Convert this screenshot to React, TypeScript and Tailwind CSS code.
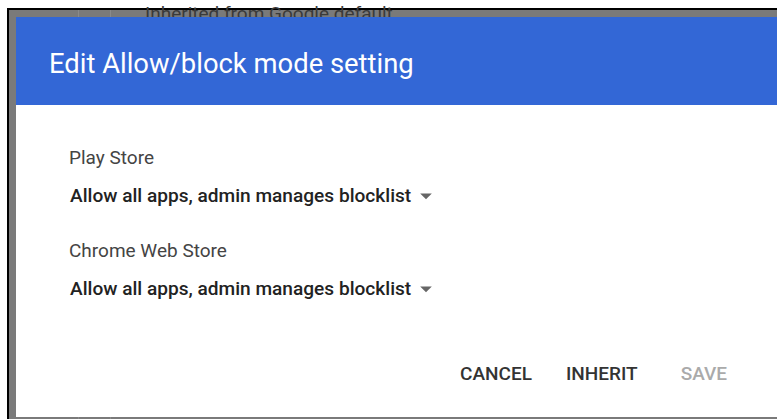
import { useState } from 'react';

type StoreKey = 'play' | 'chrome';

const MODE_LABEL = 'Allow all apps, admin manages blocklist';

const STORES: { key: StoreKey; name: string }[] = [
  { key: 'play', name: 'Play Store' },
  { key: 'chrome', name: 'Chrome Web Store' },
];

function Caret() {
  return (
    <svg width="20" height="20" viewBox="0 0 24 24" className="ml-[5px] shrink-0">
      <path d="M5 9l7 7 7-7z" fill="#666" />
    </svg>
  );
}

export default function App() {
  const [modes] = useState<Record<StoreKey, string>>({
    play: MODE_LABEL,
    chrome: MODE_LABEL,
  });

  return (
    <div
      className="h-[419px] w-[777px] overflow-hidden bg-white pl-[7px] pt-[8px]"
      style={{ fontFamily: 'Roboto, "Liberation Sans", sans-serif' }}
    >
      <div className="relative h-[420px] border-l-2 border-t-2 border-black bg-[#7a7a7a] pl-[7px] pt-[7px]">
        {/* settings page showing through behind the dialog */}
        <div className="absolute left-[69px] top-0 h-full border-l border-[#8a8a8a]" />
        <div className="absolute left-[101px] top-0 h-full border-l border-[#8a8a8a]" />
        <div className="absolute left-[136px] top-[-10px] text-[19px] text-[#3a3a3a]">
          Inherited from Google default
        </div>

        <div className="relative flex h-[400px] w-[800px] flex-col bg-white">
          <header className="flex h-[88px] items-center bg-[#3367d6] px-[33px]">
            <h1 className="pt-[6px] text-[27.4px] leading-[32px] text-white">
              Edit Allow/block mode setting
            </h1>
          </header>

          <div className="flex flex-col px-[53px] pt-[41px]">
            {STORES.map((s, i) => (
              <div key={s.key} className={i > 0 ? 'mt-[31px]' : ''}>
                <div className="h-[24px] text-[19px] leading-[24px] text-[#444]">{s.name}</div>
                <div className="mt-[14px] flex h-[24px] items-center">
                  <span className="pl-px text-[19.1px] leading-[24px] font-medium text-[#222]">
                    {modes[s.key]}
                  </span>
                  <Caret />
                </div>
              </div>
            ))}
          </div>

          <div className="flex w-[711px] justify-end pt-[61px]">
            <div className="flex h-[24px] items-center gap-[34px] text-[19px] leading-[24px] font-medium">
              <button className="text-[#333]">CANCEL</button>
              <button className="text-[#333]">INHERIT</button>
              <button className="ml-[9px] text-[#aaa]">SAVE</button>
            </div>
          </div>
        </div>
      </div>
    </div>
  );
}
